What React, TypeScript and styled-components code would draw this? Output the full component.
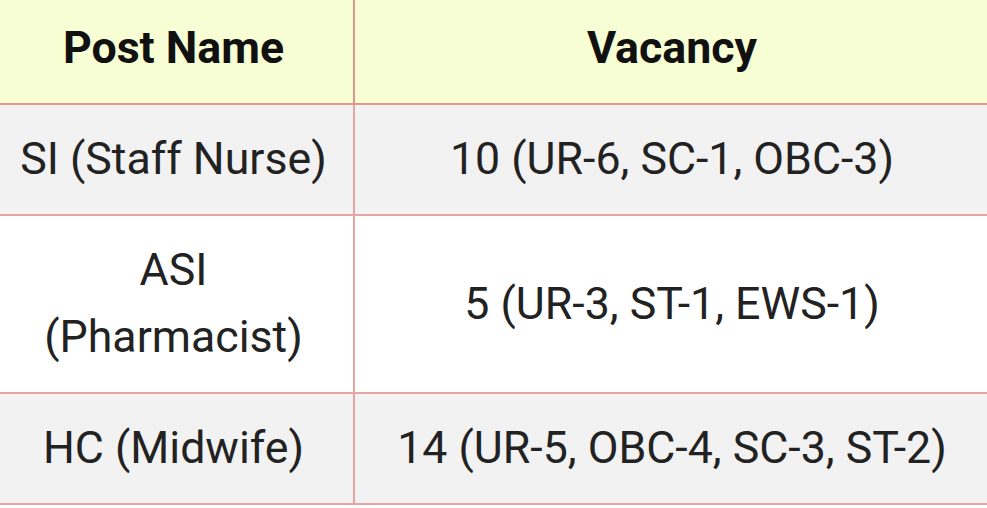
import styled, { createGlobalStyle } from "styled-components";

const GlobalStyle = createGlobalStyle`
  html, body {
    margin: 0;
    padding: 0;
    background: #ffffff;
    overflow: hidden;
  }
  body {
    font-family: Roboto, "Liberation Sans", sans-serif;
  }
`;

const Wrapper = styled.div`
  width: 987px;
  height: 508px;
  overflow: hidden;
  background: #ffffff;
`;

const Table = styled.table`
  margin: -8px 0 0 -8px;
  width: 999px;
  border-collapse: collapse;
  table-layout: fixed;
  color: #222222;
`;

const HeadRow = styled.tr`
  background: #f8fed4;
`;

const Row = styled.tr<{ shaded: boolean }>`
  background: ${({ shaded }) => (shaded ? "#f2f2f2" : "#ffffff")};
`;

const HeadCell = styled.th`
  border: 2px solid #e6968c;
  padding: 21px 10px;
  font-size: 44.7px;
  line-height: 67px;
  font-weight: 700;
  color: #111111;
  text-align: center;
`;

const Cell = styled.td`
  border: 2px solid #e8a3a3;
  padding: 21px 10px;
  font-size: 44.7px;
  line-height: 67px;
  font-weight: 400;
  text-align: center;
  vertical-align: middle;
`;

const posts = [
  { name: "SI (Staff Nurse)", vacancy: "10 (UR-6, SC-1, OBC-3)" },
  { name: "ASI (Pharmacist)", vacancy: "5 (UR-3, ST-1, EWS-1)", split: true },
  { name: "HC (Midwife)", vacancy: "14 (UR-5, OBC-4, SC-3, ST-2)" },
];

export default function App() {
  return (
    <Wrapper>
      <GlobalStyle />
      <Table>
        <colgroup>
          <col style={{ width: 361 }} />
          <col />
        </colgroup>
        <thead>
          <HeadRow>
            <HeadCell>Post Name</HeadCell>
            <HeadCell>Vacancy</HeadCell>
          </HeadRow>
        </thead>
        <tbody>
          {posts.map((post, i) => (
            <Row key={post.name} shaded={i % 2 === 0}>
              <Cell>
                {post.split ? (
                  <>
                    ASI
                    <br />
                    (Pharmacist)
                  </>
                ) : (
                  post.name
                )}
              </Cell>
              <Cell>{post.vacancy}</Cell>
            </Row>
          ))}
        </tbody>
      </Table>
    </Wrapper>
  );
}
